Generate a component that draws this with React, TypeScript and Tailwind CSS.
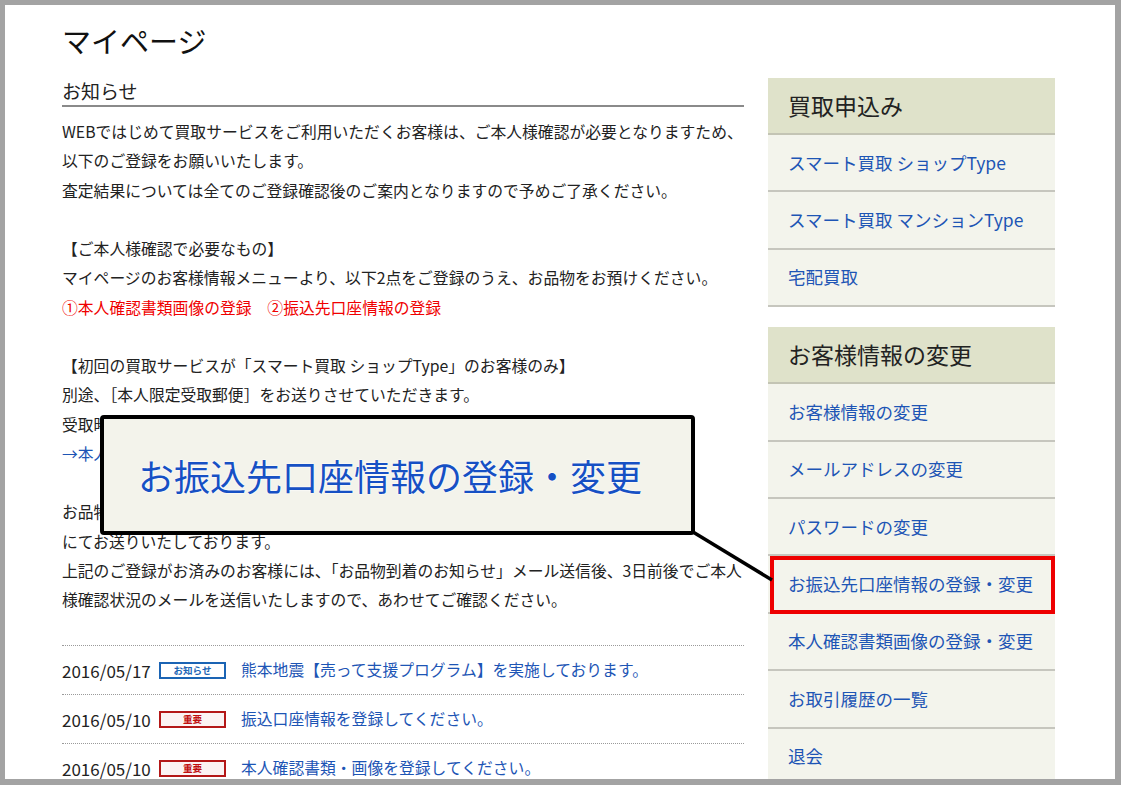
const sideGroups = [
  {
    title: '買取申込み',
    items: ['スマート買取 ショップType', 'スマート買取 マンションType', '宅配買取'],
  },
  {
    title: 'お客様情報の変更',
    items: [
      'お客様情報の変更',
      'メールアドレスの変更',
      'パスワードの変更',
      'お振込先口座情報の登録・変更',
      '本人確認書類画像の登録・変更',
      'お取引履歴の一覧',
      '退会',
    ],
  },
];

const HIGHLIGHT = 'お振込先口座情報の登録・変更';

const news = [
  { date: '2016/05/17', kind: 'info', text: '熊本地震【売って支援プログラム】を実施しております。' },
  { date: '2016/05/10', kind: 'important', text: '振込口座情報を登録してください。' },
  { date: '2016/05/10', kind: 'important', text: '本人確認書類・画像を登録してください。' },
];

function Badge({ kind }: { kind: string }) {
  if (kind === 'info') {
    return (
      <span className="flex h-[17px] w-[67px] items-center justify-center border-2 border-[#1b64b4] bg-white text-[9.5px] font-bold leading-none text-[#1b64b4]">
        お知らせ
      </span>
    );
  }
  return (
    <span className="flex h-[17px] w-[67px] items-center justify-center border-2 border-[#b41818] bg-[#fbf3f3] text-[9.5px] font-bold leading-none text-[#c01010]">
      重要
    </span>
  );
}

export default function App() {
  return (
    <div className="h-[785px] w-[1121px] bg-[#a3a3a3] pt-[5px] pl-[5px] pr-[6px] pb-[6px]">
      <div className="relative h-full overflow-hidden bg-white pl-[57px] pt-[17px] font-['Noto_Sans_CJK_JP','Liberation_Sans',sans-serif] text-[#222]">
        <h1 className="text-[29px] leading-[36px] text-[#111]">マイページ</h1>

        <div className="mt-[20px] flex gap-[24px]">
          {/* 左: お知らせ */}
          <div className="w-[682px] shrink-0">
            <h2 className="border-b-2 border-[#8a8a8a] pb-[1px] text-[19px] leading-[26px] text-[#222]">お知らせ</h2>

            <div className="mt-[10px] text-[15.8px] leading-[29.25px]">
              <p>
                WEBではじめて買取サービスをご利用いただくお客様は、ご本人様確認が必要となりますため、
                <br />
                以下のご登録をお願いいたします。
                <br />
                査定結果については全てのご登録確認後のご案内となりますので予めご了承ください。
              </p>
              <p className="mt-[29.25px]">
                【ご本人様確認で必要なもの】
                <br />
                マイページのお客様情報メニューより、以下2点をご登録のうえ、お品物をお預けください。
                <br />
                <span className="text-[#f00000]">①本人確認書類画像の登録　②振込先口座情報の登録</span>
              </p>
              <p className="mt-[29.25px]">
                【初回の買取サービスが「スマート買取 ショップType」のお客様のみ】
                <br />
                別途、［本人限定受取郵便］をお送りさせていただきます。
                <br />
                受取時にご本人様確認書類のご提示が必要となります。
                <br />
                <span className="text-[#1d55b5]">→本人限定受取郵便について</span>
              </p>
              <p className="mt-[29.25px]">
                お品物の査定結果は、ご登録いただいたメールアドレスへ「査定結果のお知らせ」メール
                <br />
                にてお送りいたしております。
                <br />
                上記のご登録がお済みのお客様には、「お品物到着のお知らせ」メール送信後、3日前後でご本人
                <br />
                様確認状況のメールを送信いたしますので、あわせてご確認ください。
              </p>
            </div>

            <ul className="mt-[31px] border-t border-dotted border-[#9a9a9a]">
              {news.map((n, i) => (
                <li
                  key={i}
                  className="flex h-[49px] items-center border-b border-dotted border-[#9a9a9a] text-[15.8px]"
                >
                  <span className="w-[97px] shrink-0 text-[17px]">{n.date}</span>
                  <Badge kind={n.kind} />
                  <span className="ml-[15px] text-[#1d55b5]">{n.text}</span>
                </li>
              ))}
            </ul>
          </div>

          {/* 右: サイドメニュー */}
          <div className="w-[287px] shrink-0">
            {sideGroups.map((g, gi) => (
              <div key={g.title} className={gi > 0 ? 'mt-[20px]' : ''}>
                <div className="flex h-[57px] items-center border-b-2 border-[#c3c4b4] bg-[#dfe2ca] pl-[20px] text-[23px] text-[#222]">
                  {g.title}
                </div>
                {g.items.map((item) => (
                  <div
                    key={item}
                    className="relative flex h-[57.4px] items-center border-b-2 border-[#c6c6be] bg-[#f3f4ec] pl-[20px] text-[17.5px] text-[#1d55b5]"
                  >
                    {item}
                    {item === HIGHLIGHT && gi === 1 && (
                      <span className="pointer-events-none absolute -bottom-[2px] left-[2px] right-0 top-0 border-4 border-[#ee0000]" />
                    )}
                  </div>
                ))}
              </div>
            ))}
          </div>
        </div>

        {/* 吹き出し */}
        <div className="absolute left-[95px] top-[410px] flex h-[120px] w-[595px] items-center rounded-[4px] border-4 border-black bg-[#f3f3eb] pl-[34px]">
          <span className="text-[36px] leading-none text-[#1650c4] [text-shadow:0_0_2px_#fff,0_0_2px_#fff]">
            お振込先口座情報の登録・変更
          </span>
        </div>
        <svg className="pointer-events-none absolute left-0 top-0" width="1110" height="779">
          <line x1="688" y1="527" x2="767" y2="575" stroke="#000" strokeWidth="3.5" />
        </svg>
      </div>
    </div>
  );
}
